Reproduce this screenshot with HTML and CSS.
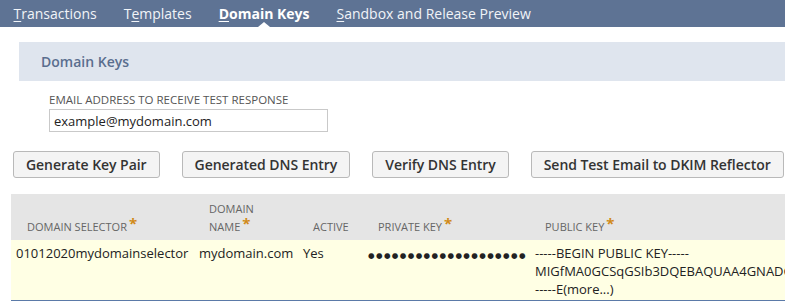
FILE: index.html
```html
<!DOCTYPE html>
<html lang="en">
<head>
    <meta charset="UTF-8">
    <title>Domain Keys</title>
    <link rel="stylesheet" href="styles.css">
</head>
<body>
    <nav class="tabs">
        <a class="tab"><u>T</u>ransactions</a>
        <a class="tab">T<u>e</u>mplates</a>
        <a class="tab active"><u>D</u>omain Keys</a>
        <a class="tab"><u>S</u>andbox and Release Preview</a>
    </nav>

    <div class="section-head">Domain Keys</div>

    <div class="field">
        <label class="field-label">Email address to receive test response</label>
        <input class="field-input" type="text" value="example@mydomain.com">
    </div>

    <div class="actions">
        <button class="btn">Generate Key Pair</button>
        <button class="btn">Generated DNS Entry</button>
        <button class="btn">Verify DNS Entry</button>
        <button class="btn">Send Test Email to DKIM Reflector</button>
    </div>

    <table class="keys">
        <thead>
            <tr>
                <th class="c-sel">Domain Selector<span class="req">*</span></th>
                <th class="c-dom">Domain<br>Name<span class="req">*</span></th>
                <th class="c-act">Active</th>
                <th class="c-priv">Private Key<span class="req">*</span></th>
                <th class="c-pub">Public Key<span class="req">*</span></th>
            </tr>
        </thead>
        <tbody>
            <tr>
                <td>01012020mydomainselector</td>
                <td>mydomain.com</td>
                <td>Yes</td>
                <td><span class="dots">●●●●●●●●●●●●●●●●●●●●</span></td>
                <td class="pub">-----BEGIN PUBLIC KEY-----<br>MIGfMA0GCSqGSIb3DQEBAQUAA4GNADCBiQKBgQC<br>-----E(more...)</td>
            </tr>
        </tbody>
    </table>
</body>
</html>
```

FILE: styles.css
```css
body {
    margin: 0;
    font-family: 'Open Sans', sans-serif;
    color: #333;
    background: #fff;
    overflow: hidden;
}
.tabs {
    display: flex;
    height: 27px;
    background: #5e7394;
}
.tab {
    position: relative;
    padding: 0 13.5px;
    line-height: 27px;
    font-size: 14px;
    color: #f1f4f8;
    white-space: nowrap;
}
.tab u {
    text-underline-offset: 2px;
}
.tab.active {
    color: #fff;
    font-weight: 700;
}
.tab.active::after {
    content: '';
    position: absolute;
    left: 50%;
    bottom: 0;
    margin-left: -6px;
    border: 6px solid transparent;
    border-bottom: 5px solid #fff;
    border-top: 0;
}
.section-head {
    margin: 15px 0 0 19px;
    height: 39px;
    line-height: 39px;
    padding-left: 22px;
    background: #dfe5ee;
    color: #5a6e8e;
    font-size: 14px;
    font-weight: 600;
}
.field {
    display: flex;
    flex-direction: column;
    align-items: flex-start;
    padding: 11px 0 0 49px;
}
.field-label {
    font-size: 11.5px;
    color: #555;
    text-transform: uppercase;
    line-height: 16px;
    height: 17px;
}
.field-input {
    box-sizing: border-box;
    width: 279px;
    height: 23px;
    margin: 0;
    padding: 0 4px;
    border: 1px solid #c9c9c9;
    font-family: 'Open Sans', sans-serif;
    font-size: 13px;
    color: #222;
}
.actions {
    display: flex;
    padding: 19px 0 0 13px;
}
.btn {
    box-sizing: border-box;
    height: 27px;
    margin-right: 22px;
    padding: 0 12px;
    border: 1px solid #b9b9b9;
    border-radius: 3px;
    background: #f4f4f4;
    font-family: 'Open Sans', sans-serif;
    font-size: 14px;
    font-weight: 600;
    letter-spacing: -0.05px;
    color: #333;
    white-space: nowrap;
}
.keys {
    margin: 16px 0 0 11px;
    border-collapse: collapse;
    table-layout: fixed;
    width: 900px;
}
.keys th,
.keys td {
    box-sizing: border-box;
}
.keys th {
    background: #e5e5e5;
    height: 46px;
    padding: 0 0 4px 16px;
    vertical-align: bottom;
    text-align: left;
    font-size: 11px;
    font-weight: 400;
    color: #666;
    text-transform: uppercase;
    line-height: 18px;
}
.c-sel { width: 182px; }
.c-dom { width: 104px; }
.c-act { width: 65px; }
.c-priv { width: 167px; }
.req {
    color: #d18a18;
    font-size: 15px;
    font-weight: 700;
    position: relative;
    top: -2px;
    margin-left: 2px;
    line-height: 0;
}
.keys td {
    background: #ffffe4;
    height: 61px;
    padding: 4px 0 0 6px;
    vertical-align: top;
    font-size: 13px;
    line-height: 18px;
    color: #222;
    white-space: nowrap;
    border-bottom: 2px solid #5b7aa8;
}
.keys td:first-child {
    padding-left: 5px;
}
.dots {
    font-family: 'DejaVu Sans', sans-serif;
    font-size: 7.5px;
    letter-spacing: 1.4px;
    color: #222;
}
```
